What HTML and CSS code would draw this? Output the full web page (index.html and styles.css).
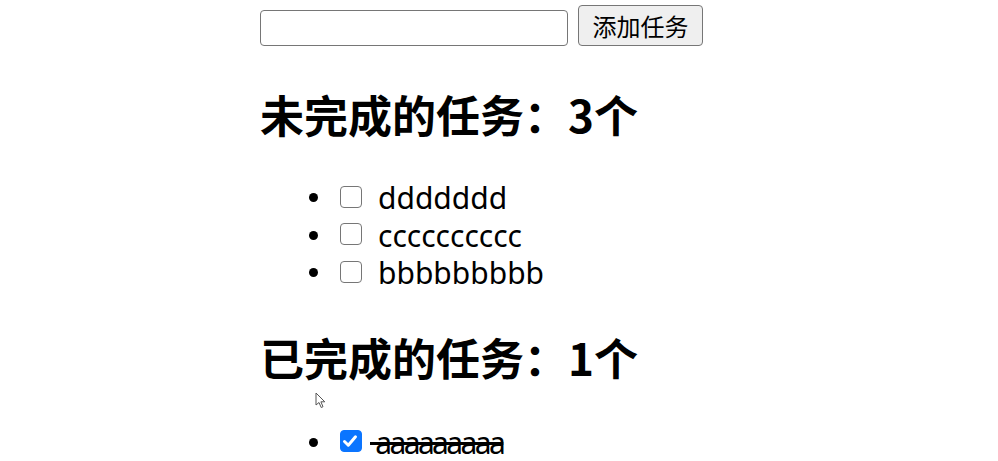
FILE: index.html
```html
<!DOCTYPE html>
<html lang="zh">
<head>
<meta charset="utf-8">
<link rel="stylesheet" href="styles.css">
</head>
<body>
<div class="app">
  <div class="add-row">
    <input class="task-input" type="text">
    <button class="add-btn">添加任务</button>
  </div>
  <h2 class="title title-todo">未完成的任务：3个</h2>
  <ul class="list">
    <li class="item"><span class="box"></span><span class="label">ddddddd</span></li>
    <li class="item"><span class="box"></span><span class="label">cccccccccc</span></li>
    <li class="item"><span class="box"></span><span class="label">bbbbbbbbb</span></li>
  </ul>
  <h2 class="title title-done">已完成的任务：1个</h2>
  <ul class="list list-done">
    <li class="item"><span class="box checked"><svg viewBox="0 0 22 22" width="22" height="22"><path d="M5.5 11.5 L9.3 15.2 L16.5 6.8" fill="none" stroke="#fff" stroke-width="3" stroke-linecap="round" stroke-linejoin="round"/></svg></span><span class="label done">&nbsp;aaaaaaaaa</span></li>
  </ul>
</div>
<svg class="cursor" viewBox="0 0 12 18" width="12" height="18"><path d="M1 1 L1 13 L4 10.5 L6.2 15.5 L8 14.7 L5.9 9.8 L9.8 9.8 Z" fill="#fff" stroke="#555" stroke-width="1"/></svg>
</body>
</html>
```
FILE: styles.css
```css
html, body {
  margin: 0;
  padding: 0;
  background: #fff;
}
body {
  position: relative;
  width: 998px;
  height: 461px;
  overflow: hidden;
  font-family: "Noto Sans", "Noto Sans CJK SC", sans-serif;
  color: #000;
}
.app {
  padding-left: 260px;
  padding-top: 5px;
}
.add-row {
  display: flex;
  align-items: flex-end;
  gap: 10px;
  height: 41px;
}
.task-input {
  box-sizing: border-box;
  width: 308px;
  height: 36px;
  margin: 0;
  border: 1.5px solid #767676;
  border-radius: 4px;
  background: #fff;
  padding: 0 4px;
}
.add-btn {
  box-sizing: border-box;
  width: 125px;
  height: 41px;
  margin: 0;
  padding: 0;
  border: 1.5px solid #767676;
  border-radius: 4px;
  background: #efefef;
  font-family: "Noto Sans CJK SC", sans-serif;
  font-size: 24px;
  color: #000;
  line-height: 1;
}
.title {
  margin: 0;
  font-family: "Noto Sans CJK SC", sans-serif;
  font-weight: 700;
  font-size: 44px;
  line-height: 60px;
  height: 60px;
}
.title-todo {
  margin-top: 38px;
}
.title-done {
  margin-top: 38px;
}
.list {
  margin: 32px 0 0 0;
  padding: 0 0 0 74px;
  list-style: disc;
  font-size: 30px;
}
.list-done {
  margin-top: 34px;
}
.item {
  height: 37.5px;
  line-height: 37.5px;
}
.item::marker {
  font-size: 26px;
}
.item > * {
  vertical-align: middle;
}
.box {
  display: inline-block;
  box-sizing: border-box;
  width: 22px;
  height: 22px;
  border: 1.6px solid #767676;
  border-radius: 4px;
  background: #fff;
  margin: 0 16px 0 6px;
  position: relative;
  top: -1px;
}
.box.checked {
  background: #0b75ff;
  border-color: #0b75ff;
  margin-right: 8px;
}
.box.checked svg {
  position: absolute;
  left: -1.6px;
  top: -1.6px;
}
.label {
  display: inline-block;
  line-height: 37.5px;
}
.label.done {
  text-decoration: line-through;
  letter-spacing: -2.6px;
}
.cursor {
  position: absolute;
  left: 315px;
  top: 392px;
}
```
